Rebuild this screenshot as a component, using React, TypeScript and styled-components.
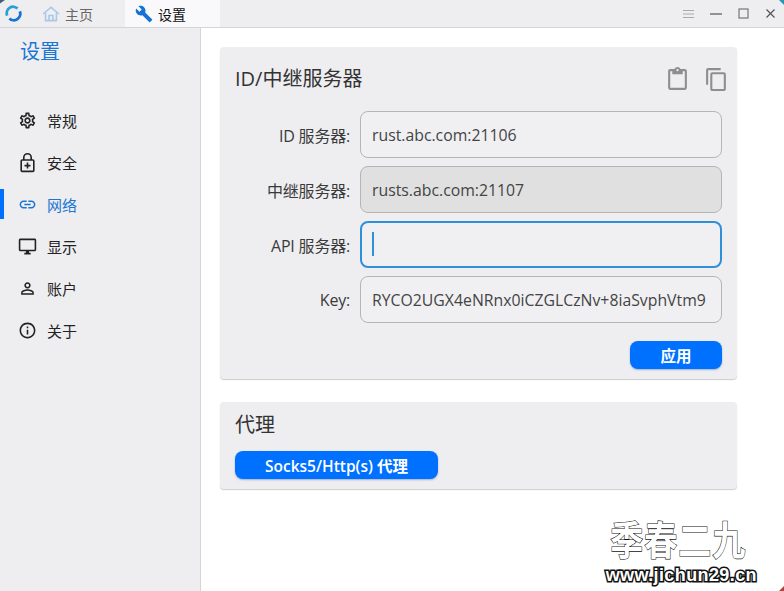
import React from 'react'
import styled, { createGlobalStyle } from 'styled-components'
import {
  MdOutlineSettings,
  MdLink,
  MdOutlineDesktopWindows,
  MdPersonOutline,
  MdInfoOutline,
  MdOutlineContentPaste,
  MdContentCopy,
  MdBuild,
} from 'react-icons/md'

const FONT = `"Open Sans", "Noto Sans CJK SC", sans-serif`

const GlobalStyle = createGlobalStyle`
  html, body {
    margin: 0;
    padding: 0;
    background: #fff;
    font-family: ${FONT};
  }
  * { box-sizing: border-box; }
`

const Frame = styled.div`
  position: relative;
  width: 784px;
  height: 591px;
  display: flex;
  flex-direction: column;
  overflow: hidden;
`

const Corner = styled.div<{ $color: string; $at: 'tl' | 'tr' | 'br' }>`
  position: absolute;
  width: 5px;
  height: 5px;
  background: ${p => p.$color};
  ${p => (p.$at === 'tl' ? 'top: 0; left: 0; clip-path: polygon(0 0, 100% 0, 0 70%);' : '')}
  ${p => (p.$at === 'tr' ? 'top: 0; right: 0; clip-path: polygon(0 0, 100% 0, 100% 100%);' : '')}
  ${p => (p.$at === 'br' ? 'bottom: 0; right: 0; clip-path: polygon(100% 0, 100% 100%, 0 100%);' : '')}
`

const TitleBar = styled.div`
  height: 28px;
  flex: none;
  display: flex;
  align-items: center;
  background: #eeeef1;
  border-bottom: 1px solid #d5d5d8;
`

const LogoSlot = styled.div`
  width: 30px;
  display: flex;
  justify-content: center;
  padding-right: 4px;
`

const Tab = styled.div<{ $active?: boolean }>`
  width: 95px;
  height: 27px;
  display: flex;
  align-items: center;
  gap: ${p => (p.$active ? '5px' : '5px')};
  padding-left: ${p => (p.$active ? '10px' : '12px')};
  font-size: 14px;
  color: ${p => (p.$active ? '#111' : '#666')};
  background: ${p => (p.$active ? '#f9f9fb' : 'transparent')};
`

const WindowButtons = styled.div`
  margin-left: auto;
  display: flex;
  align-items: center;
  gap: 16px;
  padding-right: 8px;
  color: #555;
`

const Body = styled.div`
  flex: 1;
  display: flex;
  min-height: 0;
`

const Sidebar = styled.aside`
  width: 201px;
  flex: none;
  background: #eeeef1;
  border-right: 1px solid #d5d5d8;
  padding-top: 10px;
`

const SideTitle = styled.div`
  font-size: 20px;
  line-height: 27px;
  color: #1b76d2;
  padding-left: 20px;
  margin-bottom: 40px;
`

const NavItem = styled.div<{ $active?: boolean }>`
  height: 30px;
  margin-bottom: 12px;
  display: flex;
  align-items: center;
  gap: 10px;
  padding-left: ${p => (p.$active ? '14px' : '18px')};
  font-size: 15px;
  color: ${p => (p.$active ? '#1b76d2' : '#222')};
  border-left: ${p => (p.$active ? '4px solid #0071ff' : 'none')};
`

const Main = styled.main`
  flex: 1;
  padding: 19px 47px 0 19px;
  background: #fff;
`

const Card = styled.section`
  background: #eeeef1;
  border-radius: 4px;
  box-shadow: 0 1px 1px rgba(0, 0, 0, 0.2);
  padding: 0 15px;
  margin-bottom: 23px;
`

const CardHeader = styled.div`
  display: flex;
  align-items: center;
  justify-content: space-between;
  height: 64px;
`

const CardTitle = styled.h2`
  margin: 0;
  font-size: 20px;
  line-height: 26px;
  font-weight: 400;
  color: #333;
`

const CardActions = styled.div`
  display: flex;
  gap: 14px;
  color: #8e8e91;
  margin-right: -7px;
`

const Row = styled.div`
  display: flex;
  align-items: center;
  gap: 10px;
  margin-bottom: 8px;
`

const RowLabel = styled.label`
  width: 115px;
  text-align: right;
  font-size: 16px;
  letter-spacing: -0.2px;
  color: #3a3a3a;
  white-space: nowrap;
`

const FieldWrap = styled.div`
  position: relative;
  width: 362px;
  height: 47px;
  flex: none;
  margin-right: -15px;
`

const Field = styled.input<{ $muted?: boolean; $focused?: boolean }>`
  width: 100%;
  height: 100%;
  padding: ${p => (p.$focused ? '0 10px' : '0 11px')};
  font-family: ${FONT};
  font-size: 15.8px;
  color: #444;
  border: ${p => (p.$focused ? '2px solid #2f8fd8' : '1px solid #b5b5b8')};
  border-radius: 8px;
  outline: none;
  background: ${p => (p.$muted ? '#e0e0e0' : '#f0f0f3')};
`

const Caret = styled.span`
  position: absolute;
  left: 12px;
  top: 11px;
  width: 2px;
  height: 24px;
  background: #2f8fd8;
`

const ActionRow = styled.div`
  display: flex;
  justify-content: flex-end;
  padding: 10px 0;
`

const PrimaryButton = styled.button<{ $wide?: boolean }>`
  width: ${p => (p.$wide ? '203px' : '92px')};
  height: 28px;
  border: none;
  border-radius: 8px;
  background: #0071ff;
  color: #fff;
  font-family: ${FONT};
  font-size: 15.5px;
  font-weight: 600;
  padding: 0;
  box-shadow: 0 1px 2px rgba(0, 60, 160, 0.35);
`

const ProxyTitle = styled(CardTitle)`
  padding-top: 10px;
  margin-bottom: 13px;
`

const ProxyBody = styled.div`
  padding-bottom: 10px;
`

const Watermark = styled.div`
  position: absolute;
  right: 27px;
  bottom: 8px;
  display: flex;
  flex-direction: column;
  align-items: center;
  color: #fff;
`

const WatermarkTitle = styled.div`
  font-family: "Noto Sans CJK SC", sans-serif;
  font-size: 33px;
  line-height: 44px;
  letter-spacing: 1px;
  font-weight: 700;
  padding-right: 6px;
  margin-bottom: 7px;
  transform: scaleY(1.2);
  -webkit-text-stroke: 1px #111;
  paint-order: stroke fill;
`

const WatermarkUrl = styled.div`
  font-family: "Liberation Sans", sans-serif;
  font-size: 18px;
  line-height: 16px;
  font-weight: 700;
  letter-spacing: 0.4px;
  -webkit-text-stroke: 3px #111;
  paint-order: stroke fill;
`

const Logo = () => (
  <svg width="17" height="17" viewBox="0 0 17 17" fill="none" strokeWidth="2.8">
    <path d="M2.2 10.6A6.4 6.4 0 0 1 12.6 3.6" stroke="#2b9fd8" />
    <path d="M14.8 6.4A6.4 6.4 0 0 1 4.4 13.4" stroke="#1673d6" />
  </svg>
)

const HomeIcon = () => (
  <svg width="18" height="16" viewBox="0 0 18 16" fill="none" stroke="#a9c8ea" strokeWidth="1.6">
    <path d="M1 8l8-6.6L17 8" />
    <path d="M3.6 6.8V14.6h10.8V6.8" />
    <path d="M7 14.6V9.5h4v5.1" />
  </svg>
)

const LockIcon: React.FC<{ size?: number }> = () => (
  <svg width="19" height="21" viewBox="0 0 19 21" fill="none" stroke="currentColor" strokeWidth="1.6">
    <rect x="3.2" y="8" width="12.6" height="11.4" rx="1" />
    <path d="M5.8 8V5.4a3.7 3.7 0 0 1 7.4 0V8" />
    <path d="M9.5 10.6v6M6.5 13.6h6" />
  </svg>
)

const navItems = [
  { label: '常规', icon: MdOutlineSettings },
  { label: '安全', icon: LockIcon },
  { label: '网络', icon: MdLink, active: true },
  { label: '显示', icon: MdOutlineDesktopWindows },
  { label: '账户', icon: MdPersonOutline },
  { label: '关于', icon: MdInfoOutline },
]

const App: React.FC = () => {
  return (
    <Frame>
      <GlobalStyle />
      <TitleBar>
        <LogoSlot>
          <Logo />
        </LogoSlot>
        <Tab>
          <HomeIcon />
          主页
        </Tab>
        <Tab $active>
          <MdBuild size={18} color="#1673d6" />
          设置
        </Tab>
        <WindowButtons>
          <svg width="11" height="10" viewBox="0 0 11 10" stroke="#aaa" strokeWidth="1">
            <path d="M0 1.5h11M0 5h11M0 8.5h11" />
          </svg>
          <svg width="12" height="12" viewBox="0 0 12 12" stroke="#555" strokeWidth="1.2">
            <path d="M0 6h12" />
          </svg>
          <svg width="11" height="11" viewBox="0 0 11 11" stroke="#777" strokeWidth="1.2" fill="none">
            <rect x="1" y="1" width="9" height="9" />
          </svg>
          <svg width="11" height="11" viewBox="0 0 11 11" stroke="#555" strokeWidth="1.2">
            <path d="M1.5 1.5l8 8M9.5 1.5l-8 8" />
          </svg>
        </WindowButtons>
      </TitleBar>
      <Body>
        <Sidebar>
          <SideTitle>设置</SideTitle>
          {navItems.map(item => (
            <NavItem key={item.label} $active={item.active}>
              <item.icon size={19} />
              {item.label}
            </NavItem>
          ))}
        </Sidebar>
        <Main>
          <Card>
            <CardHeader>
              <CardTitle>ID/中继服务器</CardTitle>
              <CardActions>
                <MdOutlineContentPaste size={25} />
                <MdContentCopy size={25} />
              </CardActions>
            </CardHeader>
            <Row>
              <RowLabel>ID 服务器:</RowLabel>
              <FieldWrap>
                <Field defaultValue="rust.abc.com:21106" />
              </FieldWrap>
            </Row>
            <Row>
              <RowLabel>中继服务器:</RowLabel>
              <FieldWrap>
                <Field $muted defaultValue="rusts.abc.com:21107" />
              </FieldWrap>
            </Row>
            <Row>
              <RowLabel>API 服务器:</RowLabel>
              <FieldWrap>
                <Field $focused defaultValue="" />
                <Caret />
              </FieldWrap>
            </Row>
            <Row>
              <RowLabel>Key:</RowLabel>
              <FieldWrap>
                <Field defaultValue="RYCO2UGX4eNRnx0iCZGLCzNv+8iaSvphVtm9" />
              </FieldWrap>
            </Row>
            <ActionRow>
              <PrimaryButton>应用</PrimaryButton>
            </ActionRow>
          </Card>
          <Card>
            <ProxyTitle>代理</ProxyTitle>
            <ProxyBody>
              <PrimaryButton $wide>Socks5/Http(s) 代理</PrimaryButton>
            </ProxyBody>
          </Card>
        </Main>
      </Body>
      <Watermark>
        <WatermarkTitle>季春二九</WatermarkTitle>
        <WatermarkUrl>www.jichun29.cn</WatermarkUrl>
      </Watermark>
      <Corner $at="tl" $color="#3f5f80" />
      <Corner $at="tr" $color="#2a93b8" />
      <Corner $at="br" $color="#b8403a" />
    </Frame>
  )
}

export default App
